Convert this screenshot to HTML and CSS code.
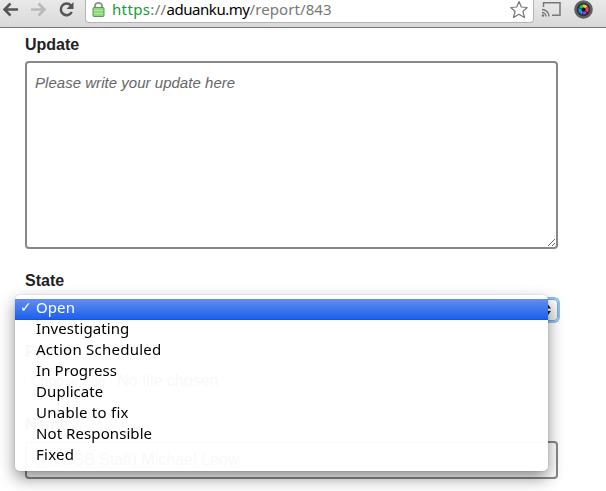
FILE: index.html
```html
<!DOCTYPE html>
<html lang="en">
<head>
<meta charset="utf-8">
<title>Report 843</title>
<link rel="stylesheet" href="styles.css">
</head>
<body>
<header class="toolbar">
  <svg class="nav" width="84" height="27" viewBox="0 0 84 27" fill="none" stroke-width="2.5">
    <path d="M18 9.500H5M10.500 3.500L4.500 9.500L10.500 15.500" stroke="#555"/>
    <path d="M31 9.500H44M38.500 3.500L44.500 9.500L38.500 15.500" stroke="#b9b9b9"/>
    <path d="M71 5.500A5.800 5.800 0 1 0 71.800 12" stroke="#555"/>
    <path d="M73.500 2V9H66.500Z" fill="#555"/>
  </svg>
  <div class="address">
    <svg class="lock" width="13" height="18" viewBox="0 0 13 18">
      <path d="M3 8V6a3.500 3.200 0 0 1 7 0V8" fill="none" stroke="#8b8b8b" stroke-width="1.800"/>
      <rect x="1" y="7.500" width="11" height="9" rx="1" fill="#8fd67c" stroke="#4ba444"/>
      <path d="M2 10.500H11M2 13.500H11" stroke="#b2e8a3"/>
    </svg>
    <span class="url"><span class="scheme">https</span>://<span class="host">aduanku.my</span><span class="path">/report/843</span></span>
    <svg class="star" width="20" height="20" viewBox="0 0 20 20"><path d="M10 1.500L12.300 7L18.200 7.500L13.900 11.500L15.500 17.500L10 14.300L4.500 17.500L6.100 11.500L1.800 7.500L7.700 7Z" fill="#fff" stroke="#777" stroke-width="1.200" stroke-linejoin="round"/></svg>
  </div>
  <svg class="extensions" width="68" height="27" viewBox="0 0 68 27">
    <path d="M5.500 7V2.750H22V15.250H14" fill="none" stroke="#777" stroke-width="1.500"/>
    <path d="M4 9.500A7 7 0 0 1 11 16.500M4 12.500A4 4 0 0 1 8 16.500" fill="none" stroke="#777" stroke-width="1.400"/>
    <circle cx="5" cy="15.500" r="1.300" fill="#777"/>
    <circle cx="45.500" cy="9.500" r="9.300" fill="#5d6064"/>
    <circle cx="45.500" cy="9.500" r="6.800" fill="#33373d"/>
    <circle cx="45.500" cy="9.500" r="5.300" fill="#11131a"/>
    <g fill="none" stroke-width="3">
      <path d="M42.300 8A3.600 3.600 0 0 1 45 6" stroke="#20c94c"/>
      <path d="M45 6A3.600 3.600 0 0 1 48.500 7.500" stroke="#e5d42a"/>
      <path d="M48.500 7.500A3.600 3.600 0 0 1 48.500 11.500" stroke="#ea3d62"/>
      <path d="M48 12A3.600 3.600 0 0 1 45 13" stroke="#a83bd8"/>
      <path d="M44.500 13A3.600 3.600 0 0 1 42 8.500" stroke="#159ee0"/>
    </g>
  </svg>
</header>
<main class="form">
  <label class="label" for="update">Update</label>
  <textarea id="update" class="update" placeholder="Please write your update here"></textarea>
  <label class="label state-label">State</label>
  <div class="state">
    <div class="select"><svg width="8" height="14" viewBox="0 0 8 14"><path d="M0 5.500L4 0L8 5.500ZM0 8L4 13.500L8 8Z" fill="#222"/></svg></div>
    <ul class="menu">
      <li class="option selected"><span class="check">✓</span><span>Open</span></li>
      <li class="option">Investigating</li>
      <li class="option wide">Action Scheduled</li>
      <li class="option">In Progress</li>
      <li class="option">Duplicate</li>
      <li class="option wide">Unable to fix</li>
      <li class="option">Not Responsible</li>
      <li class="option wide">Fixed</li>
    </ul>
  </div>
  <label class="label photo-label">Photo</label>
  <div class="file"><span class="choose">Choose File</span><span>No file chosen</span></div>
  <label class="label name-label">Name</label>
  <div class="name">(PTGSB Staff) Michael Leow</div>
</main>
</body>
</html>
```
FILE: styles.css
```css
* { box-sizing: border-box; }
body {
  margin: 0;
  height: 491px;
  overflow: hidden;
  background: #fff;
  color: #222;
  font: 16px/20px "Liberation Sans", Arial, sans-serif;
}
.toolbar {
  display: flex;
  height: 28px;
  background: linear-gradient(#e9e9e9, #d9d9d9);
  border-bottom: 1px solid #777;
}
.nav { flex: none; }
.address {
  display: flex;
  align-items: flex-start;
  width: 449px;
  height: 23px;
  margin-left: 1px;
  padding-left: 6px;
  background: #fff;
  border: 1px solid #b4b4b4;
  border-top: 0;
  border-radius: 0 0 4px 4px;
}
.lock { flex: none; }
.url {
  margin-left: 7px;
  font: 15px/19px "Noto Sans", sans-serif;
  letter-spacing: 0.35px;
  color: #777;
  white-space: nowrap;
}
.scheme { color: #149a35; }
.host { color: #000; letter-spacing: -0.45px; }
.path { letter-spacing: 0.08px; }
.star { margin: 0 4px 0 auto; }
.extensions { margin-left: 4px; }
.form {
  display: flex;
  flex-direction: column;
  width: 558px;
  padding: 7px 0 0 25px;
}
.label {
  height: 20px;
  font-weight: 700;
}
.update {
  display: block;
  width: 533px;
  height: 188px;
  margin: 6px 0 0;
  padding: 10px 8px;
  border: 2px solid #888;
  border-radius: 4px;
  outline: 0;
  font: italic 15px/20px "Liberation Sans", Arial, sans-serif;
  letter-spacing: 0.03px;
  resize: vertical;
}
.update::placeholder { color: #666; opacity: 1; }
.state-label { margin-top: 22px; }
.state {
  position: relative;
  height: 22px;
  margin-top: 8px;
}
.select {
  display: flex;
  align-items: center;
  justify-content: flex-end;
  height: 22px;
  padding-right: 6px;
  border: 1px solid #79a9d6;
  border-radius: 4px;
  background: linear-gradient(#fff, #eee);
  box-shadow: 0 0 0 2px #91bfe8;
}
.menu {
  position: absolute;
  top: -4px;
  left: -10px;
  width: 533px;
  height: 176px;
  margin: 0;
  padding: 4px 0;
  list-style: none;
  color: #000;
  background: rgba(255, 255, 255, 0.97);
  backdrop-filter: blur(0.7px);
  border-radius: 5px;
  box-shadow: 0 0 1px rgba(0, 0, 0, 0.5), 0 7px 16px rgba(0, 0, 0, 0.45);
  font: 15px/17px "Noto Sans", sans-serif;
}
.option {
  display: flex;
  height: 21px;
  padding-left: 21px;
  letter-spacing: 0.08px;
}
.wide { letter-spacing: 0.25px; }
.selected {
  padding-left: 5px;
  color: #fff;
  background: linear-gradient(#638eee, #1d60ed);
  border-bottom: 1px solid #1557dc;
}
.check { width: 16px; font-family: "DejaVu Sans", sans-serif; font-size: 14px; font-weight: 700; }
.photo-label { margin-top: 21px; }
.file {
  display: flex;
  align-items: center;
  gap: 6px;
  height: 22px;
  margin-top: 8px;
}
.choose {
  width: 86px;
  border: 1px solid #aaa;
  border-radius: 4px;
  font-size: 14px;
  line-height: 18px;
  text-align: center;
}
.name-label { margin-top: 23px; }
.name {
  height: 38px;
  margin-top: 6px;
  padding: 7px 8px;
  border: 2px solid #888;
  border-radius: 4px;
}
```
